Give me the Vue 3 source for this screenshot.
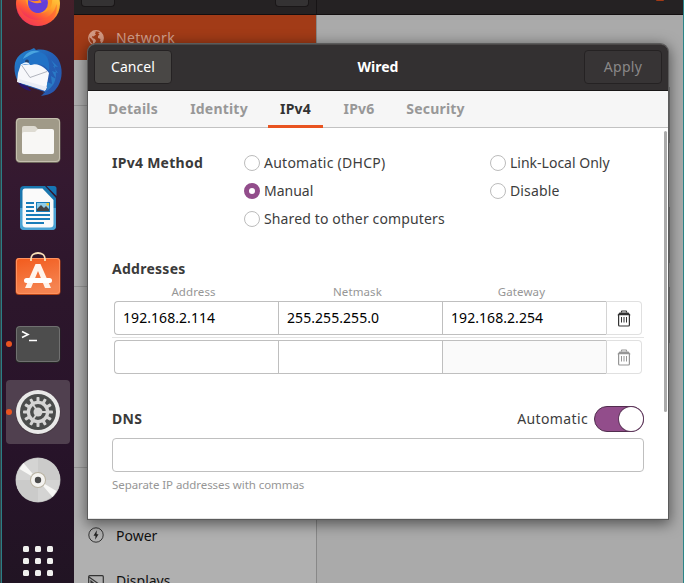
<script setup>
const tabs = [
  { name: 'Details', cls: 't-details' },
  { name: 'Identity', cls: 't-identity' },
  { name: 'IPv4', cls: 't-v4 active' },
  { name: 'IPv6', cls: 't-v6' },
  { name: 'Security', cls: 't-security' },
]
const columns = [
  [
    { label: 'Automatic (DHCP)', on: false, cls: 'wide' },
    { label: 'Manual', on: true, cls: '' },
    { label: 'Shared to other computers', on: false, cls: 'mid' },
  ],
  [
    { label: 'Link-Local Only', on: false, cls: '' },
    { label: 'Disable', on: false, cls: 'mid' },
  ],
]
const rows = [
  { cells: ['192.168.2.114', '255.255.255.0', '192.168.2.254'], off: false },
  { cells: ['', '', ''], off: true },
]
const teeth = Array.from({ length: 12 }, (_, i) => i * 30)
const dots = Array.from({ length: 9 }, (_, i) => i)
</script>

<template>
  <div class="screen">
    <div class="edge"></div>
    <nav class="dock">
      <div class="item">
        <svg viewBox="0 0 64 64">
          <defs>
            <linearGradient id="ffx" x1="0.8" y1="0.1" x2="0.3" y2="1">
              <stop offset="0" stop-color="#ffe047" /><stop offset="0.4" stop-color="#ffa52c" />
              <stop offset="0.7" stop-color="#ff5638" /><stop offset="1" stop-color="#e31280" />
            </linearGradient>
          </defs>
          <circle cx="32" cy="32" r="22" fill="url(#ffx)" />
          <path d="M10.500 27c2 12 9 20 20 21 10 0 18-6 20-16 2 12-7 22-19 22-13 0-22-12-21-27z" fill="#ff5a36" opacity="0.55" />
          <path d="M19 26c2 10 8 15 15 15 8 0 13-6 12-15l-5-4H24z" fill="#ff9a25" />
          <circle cx="32" cy="31" r="10" fill="#7141dd" />
          <path d="M22 28c5 1 7 2 12 0 3 3 1 6-3 6-3 3-7 0-9-6z" fill="#ff8b2d" />
          <path d="M22 28c4 2 7 4 11 3 4 0 6-2 8-4v6c-1 5-5 8-9 8-6 0-10-5-10-13z" fill="#6240d8" />
        </svg>
      </div>
      <div class="item">
        <svg viewBox="0 0 64 64">
          <defs>
            <linearGradient id="tb" x1="0" y1="0" x2="1" y2="1">
              <stop offset="0" stop-color="#2283ce" /><stop offset="0.5" stop-color="#245fb5" /><stop offset="1" stop-color="#2856ac" />
            </linearGradient>
          </defs>
          <path d="M9 23C11 15 18 11 24 10l4-2 2 2c11-2 21 4 24 13 3 8 2 19-4 26-3 4-8 6-15 7l4-4-21-7 4 5C11 46 7 33 9 23z" fill="url(#tb)" />
          <path d="M12 42l10 5 3 4c-6-1-11-4-13-9z" fill="#28156e" />
          <path d="M15 24l8 1c7-3 15 1 20 8l-3 17-29-8 1-9z" fill="#f7f8fb" />
          <path d="M13 39l28 8-2 4-27-9z" fill="#e9ecf4" />
          <path d="M15.500 25l8.500 12.500 17-6" fill="none" stroke="#a8abb6" stroke-width="0.900" />
          <path d="M15 24c2-8 9-15 19-12 7 2 10 8 9 19-5-7-10-8-18-6z" fill="#2172c6" />
          <path d="M17 19c3-7 10-10 17-7-7 0-11 4-17 7z" fill="#4aa5df" />
          <circle cx="21" cy="21.500" r="1.900" fill="#24406a" />
          <path d="M15 25c3-3 7-4 9 0l-6-1z" fill="#e8f4ff" />
          <path d="M45 20l7 7-5-1 5 7-6-2 4 8-5-3 1 8-5-2v8l-5 3c12-4 17-15 12-28z" fill="#2c89d0" opacity="0.7" />
        </svg>
      </div>
      <div class="item">
        <svg viewBox="0 0 64 64">
          <rect x="9.500" y="10" width="45" height="45" rx="4.500" fill="#6f695c" />
          <rect x="10" y="10" width="44" height="44" rx="4" fill="#c5bfae" />
          <rect x="11" y="11" width="42" height="42" rx="3.500" fill="#a09a88" />
          <path d="M16 20q0-2 2-2h10q2 0 3 2l1.500 2H46q2 0 2 2v20q0 2-2 2H18q-2 0-2-2z" fill="#dedbd2" />
          <path d="M16 26q0-2 2-2h11l3-3h14q2 0 2 2v21q0 2-2 2H18q-2 0-2-2z" fill="#f8f7f5" />
        </svg>
      </div>
      <div class="item">
        <svg viewBox="0 0 64 64">
          <path d="M18 10h21l11 12v28q0 4-4 4H18q-4 0-4-4V14q0-4 4-4z" fill="#1976ae" />
          <path d="M14 32h36v18q0 4-4 4H18q-4 0-4-4z" fill="#4ba3d4" />
          <path d="M40.500 10H48q2.500 0 2.500 2.500V20z" fill="#1675b4" />
          <path d="M19 12.500h17.500L47.500 24v24q0 3.500-3.500 3.500H20q-3.500 0-3.500-3.500V15q0-2.500 2.500-2.500z" fill="#fafafa" />
          <path d="M20 27h8M20 31h8M20 35h8M20 39h24M20 43h24M20 47h18" stroke="#187cb9" stroke-width="2" />
          <rect x="30" y="26" width="14" height="10" fill="#187cb9" />
          <rect x="31" y="27" width="12" height="8" fill="#8fcce8" />
          <path d="M31 35v-2l4-4 3 3 2-2 3 3v2z" fill="#444" />
          <rect x="40.500" y="27" width="2.500" height="2.500" fill="#f8c425" />
        </svg>
      </div>
      <div class="item">
        <svg viewBox="0 0 64 64">
          <defs>
            <linearGradient id="bag" x1="0" y1="0" x2="0.3" y2="1">
              <stop offset="0" stop-color="#f25c1e" /><stop offset="1" stop-color="#f58350" />
            </linearGradient>
          </defs>
          <rect x="9.500" y="14" width="45" height="37" rx="3.500" fill="#b74417" />
          <rect x="10" y="14" width="44" height="36" rx="3" fill="#ff9360" />
          <rect x="11" y="15" width="42" height="34" rx="2.500" fill="url(#bag)" />
          <path d="M25 17v-2c0-8 14-8 14 0v2" fill="none" stroke="#f8dfb7" stroke-width="1.800" />
          <path d="M29.500 20h5L45 44h-6L32 27l-7 17h-6z" fill="#fff4ec" />
          <rect x="18" y="34" width="28" height="5" rx="2.500" fill="#fff" />
        </svg>
      </div>
      <div class="item">
        <svg viewBox="0 0 64 64">
          <rect x="9.500" y="14" width="45" height="37" rx="4" fill="#252525" />
          <rect x="10" y="14" width="44" height="36" rx="4" fill="#707070" />
          <rect x="11" y="15" width="42" height="34" rx="3" fill="#4d4d4d" />
          <path d="M16 19.500l6 3-6 3M23 28.500h8" fill="none" stroke="#fff" stroke-width="1.600" />
        </svg>
        <i class="run"></i>
      </div>
      <div class="item current">
        <svg viewBox="0 0 64 64">
          <circle cx="32" cy="32.500" r="22.500" fill="#453842" />
          <circle cx="32" cy="32" r="22" fill="#e9e9e8" />
          <circle cx="32" cy="32" r="18" fill="#4b4d4c" />
          <rect v-for="a in teeth" :key="a" x="30.500" y="17" width="3" height="5" rx="0.800" fill="#d5d5d4" :transform="`rotate(${a} 32 32)`" />
          <circle cx="32" cy="32" r="9.600" fill="none" stroke="#d5d5d4" stroke-width="3.300" />
          <path d="M32 32L26 23M32 32h10M32 32L26 41" stroke="#d5d5d4" stroke-width="1.800" />
          <circle cx="32" cy="32" r="4.500" fill="#d5d5d4" />
        </svg>
        <i class="run"></i>
      </div>
      <div class="item">
        <svg viewBox="0 0 64 64">
          <circle cx="32" cy="32" r="22.500" fill="#aaa" />
          <circle cx="32" cy="32" r="22" fill="#d4d4d3" />
          <path d="M32 32V10A22 22 0 0 1 54 32zM32 32v22A22 22 0 0 1 10 32z" fill="#cbcbca" />
          <path d="M32 32L13.500 21l4-6zM32 32l18.500 11-4 6z" fill="#f7f7f5" />
          <circle cx="32" cy="32" r="8" fill="#b9b3a2" />
          <circle cx="32" cy="32" r="7" fill="#f4f3f0" />
          <circle cx="32" cy="32" r="3.200" fill="#4b4b4b" />
        </svg>
      </div>
      <div class="apps"><b v-for="d in dots" :key="d"></b></div>
    </nav>

    <main class="settings">
      <header class="topbar">
        <div class="top-left"><span></span><span></span></div>
        <div class="top-right"><i></i></div>
      </header>
      <div class="columns">
        <aside class="side">
          <div class="entry selected">
            <svg class="globe" viewBox="0 0 16 16">
              <circle cx="8" cy="8" r="7.300" fill="none" stroke="#d49a84" stroke-width="1.200" />
              <path d="M2 3.500L5 1l3 .5-1 2 1 1-2.500 2L4 6l.5 2L7 9l1 2-2 3-1-.5V11L3 8.500 1 7zM10 3l3-.5L15 6v4l-1.500 2.500L12 11l.5-2L10 8V6l1.500-1.500z" fill="#d49a84" />
            </svg>
            <span class="net">Network</span>
          </div>
          <div class="group one"></div>
          <div class="group two"></div>
          <div class="group three"></div>
          <div class="entry power">
            <svg viewBox="0 0 16 16">
              <circle cx="8" cy="8" r="7.200" fill="none" stroke="#333" stroke-width="1" />
              <path d="M8.800 3.200L5.500 8.700h2L7.200 12.800l3.300-5.500H8.600z" fill="#222" />
            </svg>
            <span>Power</span>
          </div>
          <div class="entry displays">
            <svg viewBox="0 0 16 16">
              <rect x="0.700" y="0.700" width="14.600" height="12" rx="1" fill="none" stroke="#333" stroke-width="1.200" />
              <path d="M1 2l14 10M3 6v5h6z" fill="none" stroke="#333" stroke-width="1.200" />
              <path d="M3 7v4h4z" fill="#333" />
            </svg>
            <span>Displays</span>
          </div>
        </aside>
        <section class="panel">
          <div class="card"></div>
          <div class="card gap"></div>
          <div class="card near"></div>
        </section>
      </div>
    </main>
    <div class="edge-right"></div>

    <div class="dialog">
      <header class="bar">
        <button class="btn">Cancel</button>
        <h1>Wired</h1>
        <button class="btn off">Apply</button>
      </header>
      <div class="tabs">
        <div v-for="t in tabs" :key="t.name" class="tab" :class="t.cls"><span>{{ t.name }}</span></div>
      </div>
      <div class="body">
        <div class="form">
          <div class="method">
            <h2>IPv4 Method</h2>
            <div v-for="(col, i) in columns" :key="i" class="radios">
              <label v-for="o in col" :key="o.label" class="radio">
                <i :class="{ on: o.on }"></i><span :class="o.cls">{{ o.label }}</span>
              </label>
            </div>
          </div>
          <h2>Addresses</h2>
          <div class="heads"><span>Address</span><span>Netmask</span><span>Gateway</span></div>
          <div class="list">
            <div v-for="(r, i) in rows" :key="i" class="row" :class="{ off: r.off }">
              <div v-for="(c, j) in r.cells" :key="j" class="cell">{{ c }}</div>
              <div class="trash">
                <svg viewBox="0 0 14 17">
                  <path d="M4.500 2.500V1.500q0-.5.5-.5h4q.5 0 .5.500v1" fill="none" stroke="currentColor" stroke-width="1.200" />
                  <path d="M2.500 2.500h9l2.200 2.700H.3z" fill="currentColor" />
                  <path d="M1.600 4.500V15q0 1 1 1h8.800q1 0 1-1V4.500" fill="none" stroke="currentColor" stroke-width="1.200" />
                  <path d="M4.500 7v5.500M7 7v5.500M9.500 7v5.500" stroke="currentColor" stroke-width="1" />
                </svg>
              </div>
            </div>
          </div>
          <div class="dns">
            <h2>DNS</h2>
            <div class="auto"><span>Automatic</span><div class="switch"><i></i></div></div>
          </div>
          <div class="input"></div>
          <p class="hint">Separate IP addresses with commas</p>
        </div>
        <div class="scroll"></div>
      </div>
    </div>
  </div>
</template>

<style>
html, body { margin: 0; overflow: hidden; }
</style>

<style scoped>
* { box-sizing: border-box; }
.screen { position: relative; display: flex; width: 684px; height: 583px; overflow: hidden; font-family: "Noto Sans", "Open Sans", sans-serif; font-size: 14px; color: #3d3d3d; }
.edge { width: 2px; background: #33474b; border-right: 1px solid #2b7e86; flex: none; }
.dock { width: 72px; flex: none; height: 583px; overflow: hidden; padding-left: 4px; background: linear-gradient(#45202a 0, #3c1b2a 90px, #341930 180px, #2c162b 300px, #28132a 430px, #211423 583px); }
.item { position: relative; width: 64px; height: 64px; margin-bottom: 4px; border-radius: 4px; }
.item:first-child { margin-top: -28px; }
.item svg { display: block; width: 64px; height: 64px; }
.current { background: #50404f; }
.run { position: absolute; left: 0; top: 29px; width: 6px; height: 6px; border-radius: 50%; background: #ea5420; }
.apps { display: grid; grid-template-columns: repeat(3, 6px); gap: 6px; padding: 30px 0 0 17px; }
.apps b { width: 6px; height: 6px; border-radius: 1.5px; background: #f0f0ee; }
.settings { width: 609px; display: flex; flex-direction: column; }
.topbar { display: flex; height: 15px; background: #252223; border-bottom: 1px solid #130f10; flex: none; }
.top-left { width: 243px; display: flex; justify-content: space-between; padding: 0 7px; border-right: 1px solid #171415; }
.top-left span { width: 34px; height: 7px; border-radius: 0 0 4px 4px; background: #343233; border: 1px solid #1a1718; border-top: 0; }
.top-right { flex: 1; display: flex; justify-content: flex-end; padding-right: 19px; }
.top-right i { width: 8px; height: 1px; background: #a33a16; border-radius: 0 0 4px 4px; }
.columns { display: flex; flex: 1; }
.side { width: 243px; background: #b0b0b0; border-right: 1px solid #888; }
.entry { display: flex; align-items: center; height: 45px; padding-left: 14px; gap: 12px; color: #111; }
.entry svg { width: 16px; height: 16px; }
.entry.selected { background: #a23b17; color: #d4a08d; }
.net { letter-spacing: .4px; }
.group { border-bottom: 1px solid #969696; }
.one { height: 46px; }
.two, .three { height: 181px; }
.power { margin-top: 45px; }
.power svg { margin-top: -2px; }
.displays svg { margin-top: 4px; }
.panel { flex: 1; background: #aaa; padding: 72px 13px 0 0; }
.card { height: 56px; border: 1px solid #858585; }
.card.gap { margin-top: 64px; }
.card.near { margin-top: 24px; }
.edge-right { width: 1px; background: #2b8588; }
.dialog { position: absolute; left: 88px; top: 44px; width: 580px; height: 475px; border-radius: 8px 8px 0 0; box-shadow: 0 0 0 1px #5b5b5b, 0 3px 14px 2px rgba(0,0,0,.5); background: #fff; }
.bar { height: 47px; display: flex; align-items: center; justify-content: space-between; padding: 0 6px 2px; background: #333031; border-radius: 7px 7px 0 0; border-top: 1px solid #4b4848; border-bottom: 1px solid #191717; }
.bar h1 { margin: 0; font-size: 14px; font-weight: 700; color: #fff; line-height: 20px; }
.btn { width: 78px; height: 34px; padding: 0; border: 1px solid #252223; border-radius: 4px; background: #494745; color: #fff; font: 14px/20px "Noto Sans", sans-serif; letter-spacing: .08px; }
.btn.off { background: #373435; color: #8a8888; letter-spacing: .35px; }
.tabs { display: flex; height: 37px; background: #f6f6f6; border-bottom: 1px solid #c2c2c2; padding-left: 8px; }
.tab { display: flex; justify-content: center; height: 37px; line-height: 36px; font-weight: 700; color: #989898; letter-spacing: .2px; }
.tab.active { color: #333; border-bottom: 3px solid #e95420; }
.t-details { width: 74px; } .t-identity { width: 98px; } .t-v4 { width: 55px; } .t-v6 { width: 72px; } .t-security { width: 81px; }
.body { display: flex; height: 391px; border-bottom: 1px solid #e4e4e4; }
.form { width: 556px; padding: 21px 0 0 24px; }
.form h2 { margin: 0; font-size: 14px; line-height: 28px; font-weight: 700; color: #3a3a3a; letter-spacing: .27px; }
.method { display: grid; grid-template-columns: 132px 246px 154px; height: 106px; }
.radio { display: flex; align-items: center; height: 28px; gap: 4px; white-space: nowrap; }
.radio i { width: 16px; height: 16px; border-radius: 50%; border: 1px solid #bcbcbc; background: #fff; flex: none; }
.radio i.on { border: 5.5px solid #924d8b; }
.radio span { line-height: 20px; }
.wide { letter-spacing: .25px; }
.mid { letter-spacing: .13px; }
.heads { display: flex; padding-left: 2px; height: 18px; }
.heads span { width: 164px; padding-right: 5px; text-align: center; font-size: 11.500px; line-height: 18px; color: #969696; letter-spacing: .1px; }
.list { display: flex; flex-direction: column; gap: 5px; height: 73px; background: linear-gradient(#e4e4e4, #e4e4e4) 0 36px / 532px 1px no-repeat; }
.row { display: flex; height: 34px; margin: 0 2px; }
.cell { width: 164px; height: 34px; border: 1px solid #bfbfbf; border-right: 0; padding-left: 8px; line-height: 32px; color: #000; letter-spacing: .06px; }
.cell:first-child { border-radius: 4px 0 0 4px; }
.row.off .cell:nth-child(3) { background: #fafafa; }
.trash { width: 36px; height: 34px; border: 1px solid #e0e0e0; border-left-color: #d4d4d4; border-radius: 0 4px 4px 0; display: flex; align-items: center; justify-content: center; color: #333; }
.trash svg { width: 14px; height: 17px; margin-right: 1px; }
.off .trash { color: #969696; }
.dns { display: flex; justify-content: space-between; align-items: center; height: 28px; margin-top: 31px; }
.auto { display: flex; gap: 6px; align-items: center; }
.auto span { letter-spacing: .36px; line-height: 20px; padding-bottom: 1px; }
.switch { width: 50px; height: 26px; border-radius: 13px; background: #924d8b; border: 1px solid #512d4e; display: flex; justify-content: flex-end; }
.switch i { width: 24px; height: 24px; border-radius: 50%; background: #fff; box-shadow: 0 0 0 1px #603a5d; }
.input { height: 34px; border: 1px solid #bfbfbf; border-radius: 4px; margin-top: 5px; }
.hint { margin: 4px 0 0; font-size: 11.500px; line-height: 18px; color: #969696; letter-spacing: -.07px; }
.scroll { width: 3px; height: 281px; margin: 3px 0 0 20px; background: #aaa; border-radius: 2px; }
</style>
